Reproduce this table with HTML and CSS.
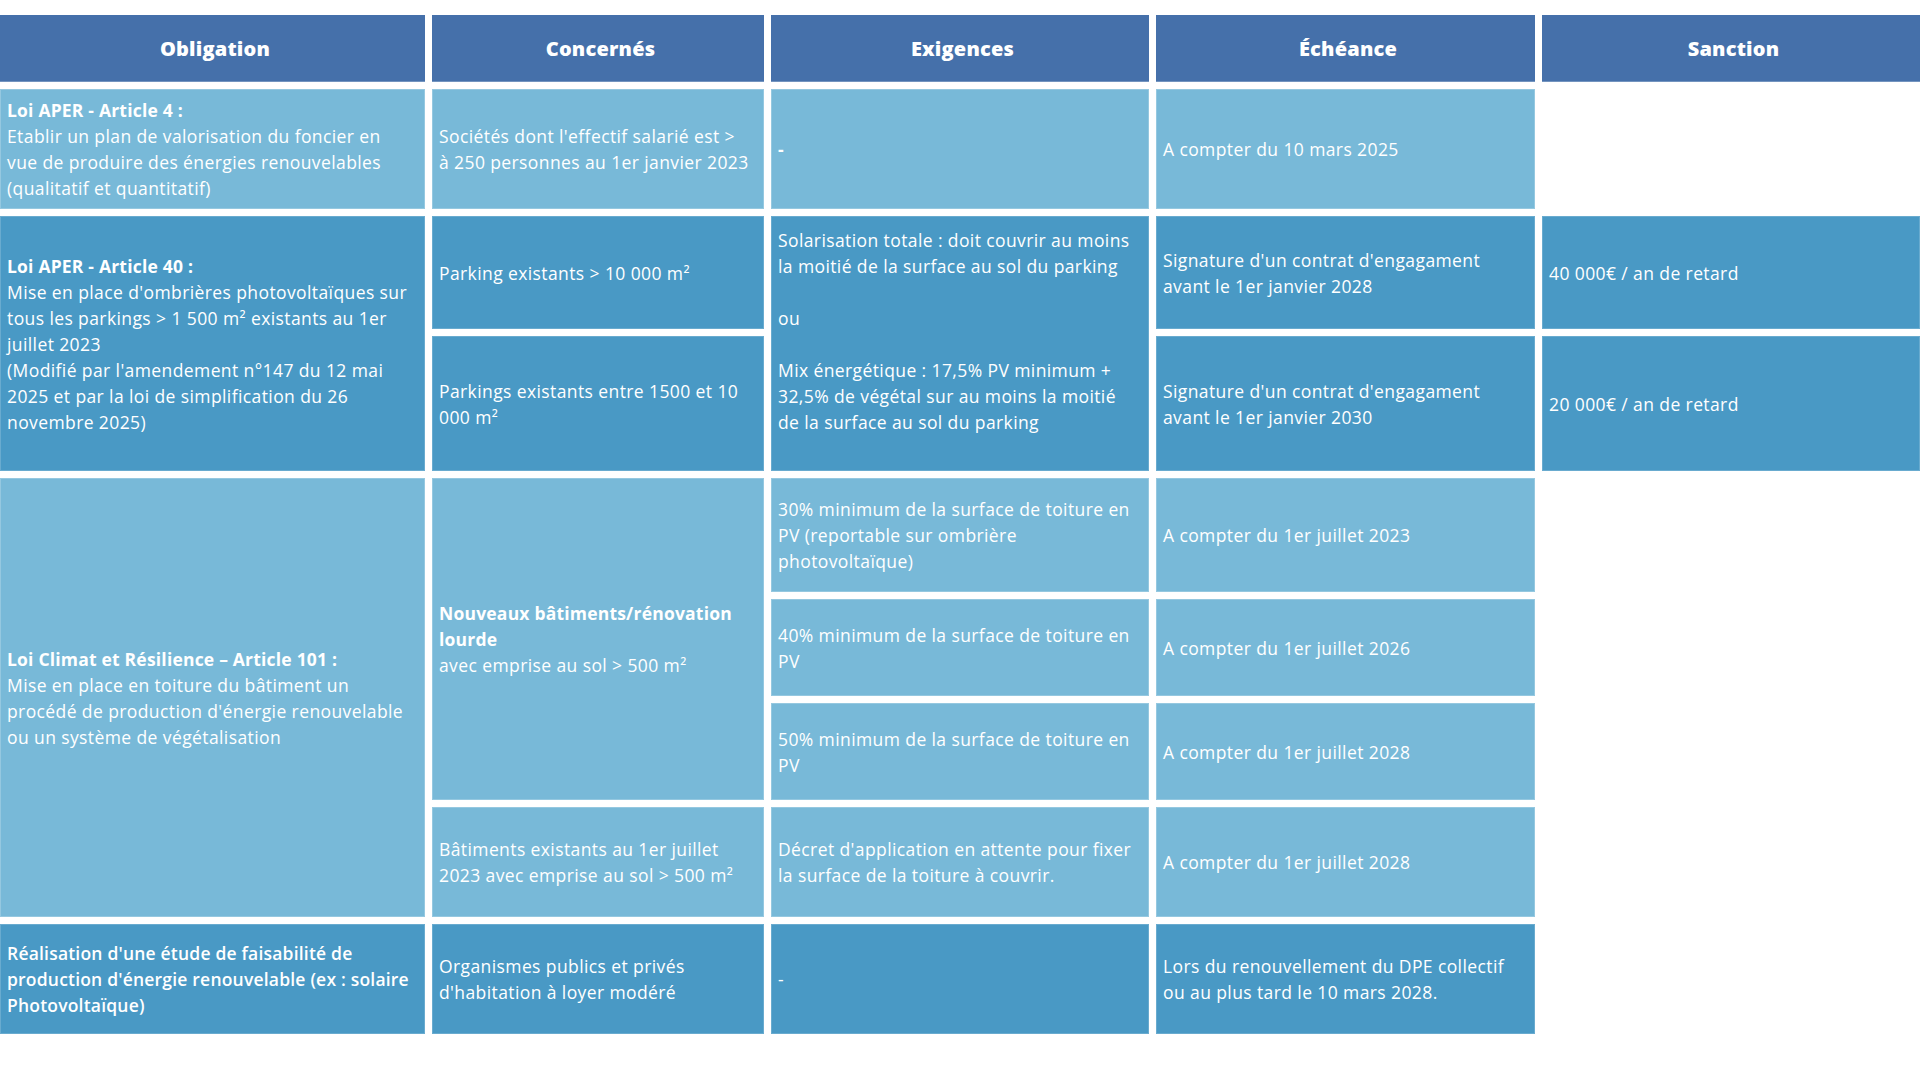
FILE: index.html
```html
<!DOCTYPE html>
<html lang="fr">
<head>
<meta charset="utf-8">
<title>Obligations</title>
<link rel="stylesheet" href="styles.css">
</head>
<body>
<div class="grid">
  <div class="cell head c1">Obligation</div>
  <div class="cell head c2">Concernés</div>
  <div class="cell head c3">Exigences</div>
  <div class="cell head c4">Échéance</div>
  <div class="cell head c5">Sanction</div>

  <div class="cell light c1 r2"><div class="txt"><b>Loi APER - Article 4 :</b><br>Etablir un plan de valorisation du foncier en<br>vue de produire des énergies renouvelables<br>(qualitatif et quantitatif)</div></div>
  <div class="cell light c2 r2"><div class="txt">Sociétés dont l'effectif salarié est &gt;<br>à 250 personnes au 1er janvier 2023</div></div>
  <div class="cell light c3 r2"><div class="txt"><b>-</b></div></div>
  <div class="cell light c4 r2"><div class="txt">A compter du 10 mars 2025</div></div>

  <div class="cell dark c1 r3-4"><div class="txt"><b>Loi APER - Article 40 :</b><br>Mise en place d'ombrières photovoltaïques sur<br>tous les parkings &gt; 1 500 m² existants au 1er<br>juillet 2023<br>(Modifié par l'amendement n°147 du 12 mai<br>2025 et par la loi de simplification du 26<br>novembre 2025)</div></div>
  <div class="cell dark c2 r3"><div class="txt">Parking existants &gt; 10 000 m²</div></div>
  <div class="cell dark c2 r4"><div class="txt">Parkings existants entre 1500 et 10<br>000 m²</div></div>
  <div class="cell dark c3 r3-4"><div class="txt">Solarisation totale : doit couvrir au moins<br>la moitié de la surface au sol du parking<br>&nbsp;<br>ou<br>&nbsp;<br>Mix énergétique : 17,5% PV minimum +<br>32,5% de végétal sur au moins la moitié<br>de la surface au sol du parking<br>&nbsp;</div></div>
  <div class="cell dark c4 r3"><div class="txt">Signature d'un contrat d'engagament<br>avant le 1er janvier 2028</div></div>
  <div class="cell dark c4 r4"><div class="txt">Signature d'un contrat d'engagament<br>avant le 1er janvier 2030</div></div>
  <div class="cell dark c5 r3"><div class="txt">40 000€ / an de retard</div></div>
  <div class="cell dark c5 r4"><div class="txt">20 000€ / an de retard</div></div>

  <div class="cell light c1 r5-8"><div class="txt"><b>Loi Climat et Résilience – Article 101 :</b><br>Mise en place en toiture du bâtiment un<br>procédé de production d'énergie renouvelable<br>ou un système de végétalisation</div></div>
  <div class="cell light c2 r5-7"><div class="txt"><b>Nouveaux bâtiments/rénovation<br>lourde</b><br>avec emprise au sol &gt; 500 m²</div></div>
  <div class="cell light c2 r8"><div class="txt">Bâtiments existants au 1er juillet<br>2023 avec emprise au sol &gt; 500 m²</div></div>
  <div class="cell light c3 r5"><div class="txt">30% minimum de la surface de toiture en<br>PV (reportable sur ombrière<br>photovoltaïque)</div></div>
  <div class="cell light c3 r6"><div class="txt">40% minimum de la surface de toiture en<br>PV</div></div>
  <div class="cell light c3 r7"><div class="txt">50% minimum de la surface de toiture en<br>PV</div></div>
  <div class="cell light c3 r8"><div class="txt">Décret d'application en attente pour fixer<br>la surface de la toiture à couvrir.</div></div>
  <div class="cell light c4 r5"><div class="txt">A compter du 1er juillet 2023</div></div>
  <div class="cell light c4 r6"><div class="txt">A compter du 1er juillet 2026</div></div>
  <div class="cell light c4 r7"><div class="txt">A compter du 1er juillet 2028</div></div>
  <div class="cell light c4 r8"><div class="txt">A compter du 1er juillet 2028</div></div>

  <div class="cell dark c1 r9"><div class="txt semi">Réalisation d'une étude de faisabilité de<br>production d'énergie renouvelable (ex : solaire<br>Photovoltaïque)</div></div>
  <div class="cell dark c2 r9"><div class="txt">Organismes publics et privés<br>d'habitation à loyer modéré</div></div>
  <div class="cell dark c3 r9"><div class="txt">-</div></div>
  <div class="cell dark c4 r9"><div class="txt">Lors du renouvellement du DPE collectif<br>ou au plus tard le 10 mars 2028.</div></div>
</div>
</body>
</html>
```
FILE: styles.css
```css
html, body {
  margin: 0;
  padding: 0;
  background: #ffffff;
}
body {
  padding-top: 15px;
  font-family: "Open Sans", Lato, sans-serif;
  color: #ffffff;
}
.grid {
  display: grid;
  grid-template-columns: 425px 332px 378px 379px 1fr;
  grid-template-rows: 67px 120px 113px 135px 114px 97px 97px 110px 110px;
  gap: 7px;
}
.cell {
  display: flex;
  align-items: center;
  padding: 0 2px 0 7px;
  font-size: 17.5px;
  line-height: 26px;
  letter-spacing: 0.4px;
  box-sizing: border-box;
  white-space: nowrap;
  overflow: hidden;
}
.head {
  background: #4570aa;
  justify-content: center;
  font-weight: 800;
  font-size: 20px;
  letter-spacing: 0.2px;
  box-shadow: inset 0 -1px 0 rgba(255,255,255,0.25);
  grid-row: 1;
}
.light {
  background: #78b9d8;
  box-shadow: inset 0 0 0 1px rgba(255,255,255,0.22);
}
.dark {
  background: #4999c5;
  box-shadow: inset 0 0 0 1px rgba(255,255,255,0.18);
}
.txt b { font-weight: 700; letter-spacing: 0.2px; }
.semi { font-weight: 600; letter-spacing: 0.2px; }

.c1 { grid-column: 1; }
.c2 { grid-column: 2; }
.c3 { grid-column: 3; }
.c4 { grid-column: 4; }
.c5 { grid-column: 5; }

.r2 { grid-row: 2; }
.r3 { grid-row: 3; }
.r4 { grid-row: 4; }
.r3-4 { grid-row: 3 / span 2; }
.r5 { grid-row: 5; }
.r6 { grid-row: 6; }
.r7 { grid-row: 7; }
.r8 { grid-row: 8; }
.r5-7 { grid-row: 5 / span 3; }
.r5-8 { grid-row: 5 / span 4; }
.r9 { grid-row: 9; }
```
